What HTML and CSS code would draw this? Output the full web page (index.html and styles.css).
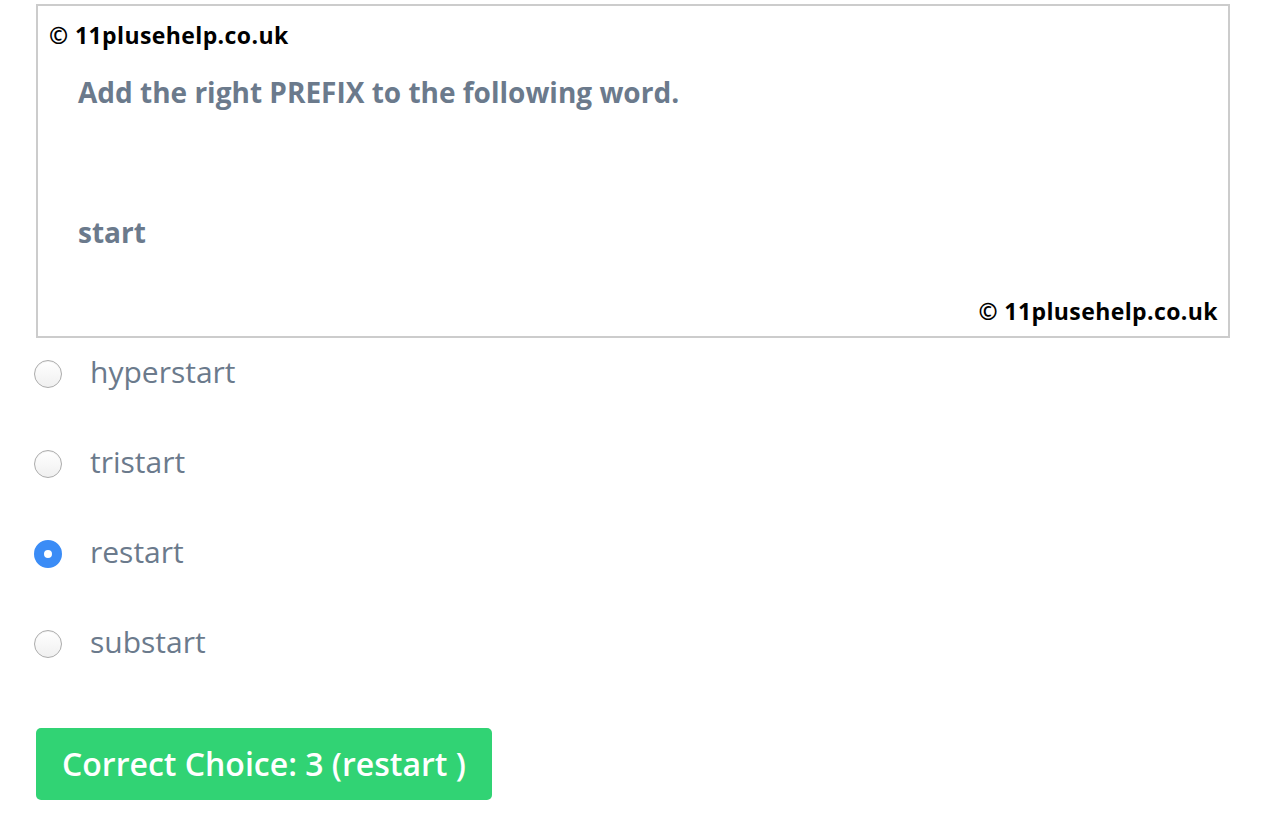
FILE: index.html
```html
<!DOCTYPE html>
<html>
<head>
<meta charset="utf-8">
<link rel="stylesheet" href="styles.css">
</head>
<body>
<div class="page">
  <div class="qbox">
    <div class="copy">© 11plusehelp.co.uk</div>
    <div class="question">Add the right PREFIX to the following word.</div>
    <div class="word">start</div>
    <div class="copy copy-right">© 11plusehelp.co.uk</div>
  </div>
  <div class="options">
    <label class="opt"><input type="radio" name="q" class="radio"><span class="label">hyperstart</span></label>
    <label class="opt"><input type="radio" name="q" class="radio"><span class="label">tristart</span></label>
    <label class="opt"><input type="radio" name="q" class="radio" checked><span class="label">restart</span></label>
    <label class="opt"><input type="radio" name="q" class="radio"><span class="label">substart</span></label>
  </div>
  <div class="answer">Correct Choice: 3 (restart )</div>
</div>
</body>
</html>
```
FILE: styles.css
```css
html, body { margin: 0; padding: 0; background: #fff; }
body { font-family: "Open Sans", "Liberation Sans", sans-serif; }
.page { padding: 4px 36px 0 34px; }
.qbox {
  margin-left: 2px;
  border: 2px solid #cccccc;
  display: flex;
  flex-direction: column;
  padding: 0 10px 0 11px;
  box-sizing: border-box;
  height: 334px;
}
.copy {
  font-size: 23px;
  letter-spacing: 0.4px;
  font-weight: 700;
  color: #000;
  margin-top: 14px;
  line-height: 30px;
}
.copy-right { text-align: right; margin-top: auto; margin-bottom: 10px; }
.question {
  font-size: 28px;
  font-weight: 700;
  color: #6b7a8c;
  margin: 24px 0 0 29px;
  line-height: 36px;
}
.word {
  font-size: 28px;
  font-weight: 700;
  color: #6b7a8c;
  margin: 104px 0 0 29px;
  line-height: 36px;
}
.options { display: flex; flex-direction: column; }
.opt {
  display: flex;
  align-items: center;
  height: 90px;
  font-size: 30px;
  color: #6b7a8c;
}
.opt:first-child { height: 81px; padding-bottom: 9px; box-sizing: border-box; }
.label { padding-bottom: 4px; line-height: 40px; }
.radio {
  appearance: none;
  -webkit-appearance: none;
  width: 28px; height: 28px;
  margin: 0 28px 0 0;
  border-radius: 50%;
  border: 1px solid #acacac;
  background: linear-gradient(#ffffff, #f0f0f0);
  box-shadow: inset 0 1px 1px rgba(0,0,0,0.05);
  box-sizing: border-box;
  flex: none;
}
.radio:checked {
  border: 10px solid #3b8cf6;
  background: #fff;
  box-shadow: none;
}
.answer {
  display: inline-block;
  margin: 39px 0 0 2px;
  background: #31d374;
  color: #fff;
  font-size: 32px;
  font-weight: 600;
  line-height: 72px;
  padding: 0 26px;
  border-radius: 5px;
}
```
